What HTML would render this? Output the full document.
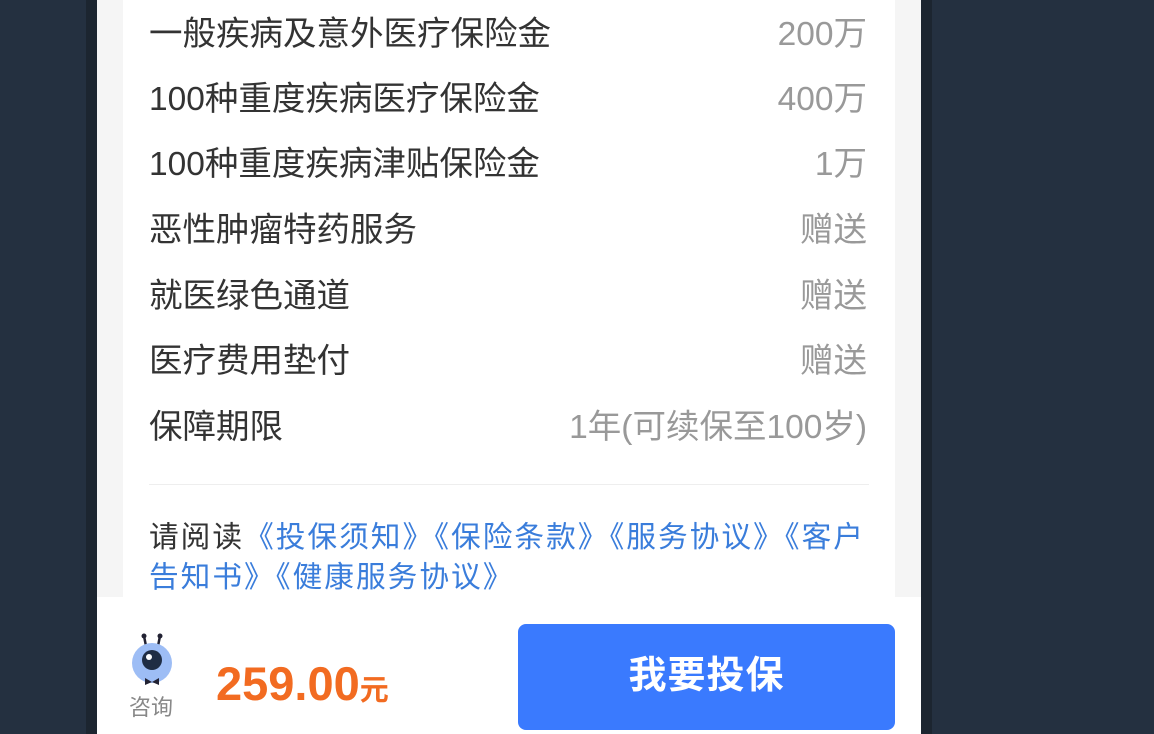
<!DOCTYPE html>
<html><head><meta charset="utf-8"><style>
body{margin:0;width:1154px;height:734px;overflow:hidden;background:#243040;position:relative;font-family:"Liberation Sans","Noto Sans CJK SC",sans-serif}
.sl{position:absolute;top:0;bottom:0;left:86px;width:11px;background:#1c2530}
.sr{position:absolute;top:0;bottom:0;left:921px;width:11px;background:#1c2530}
.panel{position:absolute;left:97px;top:0;width:824px;height:734px;background:#f5f5f5}
.card{position:absolute;left:123px;top:0;width:772px;height:600px;background:#fff}
.row{position:absolute;left:149px;width:720px;height:46px;font-size:33.5px;color:#333;line-height:46px}
.row span{position:absolute;right:2px;color:#999}
.hr{position:absolute;left:149px;width:720px;top:484px;height:1px;background:#eee}
.links{position:absolute;left:149px;top:518px;width:760px;font-size:29.7px;line-height:40px;color:#333;white-space:nowrap;letter-spacing:2px}
.links b{font-weight:normal;color:#3a7ddb}
.bar{position:absolute;left:97px;top:597px;width:824px;height:137px;background:#fff}
.btn{position:absolute;left:518px;top:624px;width:377px;height:106px;background:#3a7afe;border-radius:8px;color:#fff;font-size:38px;font-weight:bold;text-align:center;line-height:104px;letter-spacing:1px}
.price{position:absolute;left:216px;top:651px;color:#f26b21;font-size:47px;font-weight:bold;line-height:66px}
.price small{font-size:29px}
.zx{position:absolute;left:129px;top:690px;font-size:22px;color:#888}
</style></head><body>
<div class="sl"></div><div class="sr"></div>
<div class="panel"></div>
<div class="card"></div>
<div class="row" style="top:12px">一般疾病及意外医疗保险金<span>200万</span></div>
<div class="row" style="top:77px">100种重度疾病医疗保险金<span>400万</span></div>
<div class="row" style="top:142px">100种重度疾病津贴保险金<span>1万</span></div>
<div class="row" style="top:208px">恶性肿瘤特药服务<span>赠送</span></div>
<div class="row" style="top:274px">就医绿色通道<span>赠送</span></div>
<div class="row" style="top:339px">医疗费用垫付<span>赠送</span></div>
<div class="row" style="top:405px">保障期限<span>1年(可续保至100岁)</span></div>
<div class="hr"></div>
<div class="links">请阅读<b>《投保须知》《保险条款》《服务协议》《客户<br>告知书》《健康服务协议》</b></div>
<div class="bar"></div>
<svg style="position:absolute;left:128px;top:632px" width="48" height="56" viewBox="0 0 48 56">
<path d="M18 14 L16 4 M30 14 L32 4" stroke="#223" stroke-width="2.5" fill="none"/>
<circle cx="16" cy="4" r="2.5" fill="#223"/><circle cx="32" cy="4" r="2.5" fill="#223"/>
<circle cx="24" cy="31" r="20" fill="#9dbdf5"/>
<circle cx="24" cy="28" r="10" fill="#1f2d44"/><circle cx="21" cy="25" r="3" fill="#fff"/>
<path d="M17 46 L24 50 L31 46 L31 53 L24 50 L17 53Z" fill="#223"/>
</svg>
<div class="zx">咨询</div>
<div class="price">259.00<small>元</small></div>
<div class="btn">我要投保</div>
</body></html>
